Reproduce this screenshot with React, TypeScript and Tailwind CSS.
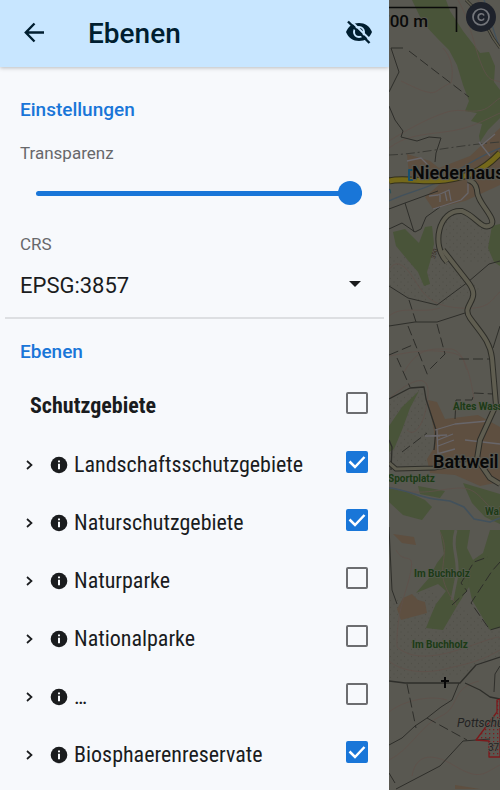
import { useState } from "react";

type Layer = { name: string; visible: boolean };

const initialLayers: Layer[] = [
  { name: "Landschaftsschutzgebiete", visible: true },
  { name: "Naturschutzgebiete", visible: true },
  { name: "Naturparke", visible: false },
  { name: "Nationalparke", visible: false },
  { name: "…", visible: false },
  { name: "Biosphaerenreservate", visible: true },
];

function Checkbox({
  id,
  checked,
  onChange,
}: {
  id: string;
  checked: boolean;
  onChange: (value: boolean) => void;
}) {
  return (
    <span className="mb-[6px] grid shrink-0">
      <input
        id={id}
        type="checkbox"
        checked={checked}
        onChange={(e) => onChange(e.target.checked)}
        className="peer col-start-1 row-start-1 size-[22px] appearance-none rounded-xs border-2 border-[#6c6d70] checked:border-[#1976d8] checked:bg-[#1976d8]"
      />
      <svg
        viewBox="0 0 22 22"
        className="pointer-events-none invisible col-start-1 row-start-1 size-[22px] peer-checked:visible"
        fill="none"
        stroke="#fff"
        strokeWidth="2.5"
      >
        <path d="M3.5 10.5 9 16 18.5 6" />
      </svg>
    </span>
  );
}

function MapView() {
  return (
    <svg
      viewBox="389 0 111 790"
      preserveAspectRatio="xMinYMin slice"
      className="absolute inset-0 size-full"
      fill="none"
      strokeLinejoin="round"
      fontFamily="Roboto, sans-serif"
    >
      <defs>
        <pattern id="dots" width="7" height="7" patternUnits="userSpaceOnUse">
          <circle cx="2" cy="2" r="0.7" fill="#504f48" />
          <circle cx="5.5" cy="5.5" r="0.7" fill="#504f48" />
        </pattern>
        <pattern id="reserve" width="4" height="4" patternUnits="userSpaceOnUse">
          <rect x="1" y="1" width="1.3" height="1.3" fill="#7c1c1e" />
        </pattern>
      </defs>
      <rect x="389" width="2000" height="2000" fill="#595851" />

      {/* meadows */}
      <g fill="url(#dots)">
        <path d="M389 255 450 262 482 288 440 306 410 298 389 286Z" />
        <path d="M389 400 424 388 430 440 438 466 389 468Z" />
        <path d="M389 600 430 590 500 630V655L460 676 389 680Z" />
        <path d="M446 212 478 220 492 235 500 228V262L460 262 446 245Z" />
      </g>

      {/* woodland */}
      <g fill="#495439">
        <path d="M412 0H446L450 11 463 31 480 53 489 52 495 66 494 82 500 90V118L488 130 480 142 479 136 482 124 471 121 477 113 465 111 469 101 463 85 457 65 449 50 437 38 423 23Z" />
        <path d="M393 232 405 229 419 243 425 227 432 226 434 244 430 262 427 272 430 284 424 286 418 272 406 258 396 246Z" />
        <path d="M492 226 500 224V266L494 262 488 248Z" />
        <path d="M389 426 402 407 419 391 410 408 402 430 394 449 389 452Z" />
        <path d="M389 487 405 491 425 500 432 507 422 520 403 515 389 502Z" />
        <path d="M418 486 445 491 440 498 420 494ZM463 483 500 494V524L485 517 472 503Z" />
        <path d="M440 530H470L467 548 476 566 469 587 457 606 443 630 426 628 432 613 436 604 446 591 438 584 416 593 429 578 437 563 444 554Z" />
        <path d="M490 530H500V628L490 630 472 600 468 582 473 560 483 553Z" />
      </g>
      <path d="M456 530C450 550 461 560 456 580L452 600" stroke="#5a5952" strokeWidth="3" />

      {/* settlements */}
      <g fill="#5e4f40">
        <path d="M407 154 430 161 439 168 470 156 500 128V185L465 201 433 209 425 197 440 184 430 180 409 175Z" />
        <path d="M428 400 437 402 445 419 478 415 500 427V482L480 486 455 475 430 473 427 459 434 448 434 431Z" />
        <path d="M403 598 412 594 418 600 425 602 427 613 412 617 401 620 397 609Z" />
        <path d="M393 534 414 537 416 545 402 543Z" />
        <path d="M455 785 480 789H455Z" />
      </g>

      {/* contour lines */}
      <g stroke="#60504a" strokeWidth="0.8">
        <path d="M401 81C416 88 430 96 437 91S448 84 451 83C453 75 454 60 443 48" />
        <path d="M389 141C415 125 430 118 444 113S465 112 477 111 492 103 500 98" />
        <path d="M389 148C405 136 420 135 444 132S477 124 500 113" />
        <path d="M458 0C470 20 475 50 482 66S492 79 500 82" />
        <path d="M478 0C486 20 490 35 500 45" />
        <path d="M389 270C396 258 405 265 414 279S429 306 460 308 490 300 500 292" />
        <path d="M389 316C402 305 420 314 440 308" />
        <path d="M404 372C420 344 435 350 449 349S470 372 474 399" />
        <path d="M389 356C410 352 427 349 447 352S462 361 467 370" />
        <path d="M407 430C417 440 427 416 428 394S411 380 391 397" />
        <path d="M396 550C404 565 414 551 411 570S396 610 397 647C415 663 445 655 473 645S498 637 500 638" />
        <path d="M389 661C402 672 425 674 445 669S480 662 500 650" />
        <path d="M440 532C450 550 439 566 444 582S454 598 456 606" />
        <path d="M389 712C404 700 431 695 447 700" />
        <path d="M389 760C410 750 422 724 441 716S450 688 479 681" />
        <path d="M412 776C415 757 429 750 455 766S485 772 500 765" />
        <path d="M389 487C420 498 440 488 461 488S486 512 500 511" />
      </g>

      {/* streams */}
      <g stroke="#42515c" strokeWidth="1.3">
        <path d="M484 0C490 15 493 32 500 48" />
        <path d="M389 201C405 193 423 190 440 181S470 160 500 148" />
        <path d="M389 488C405 489 418 497 434 499L450 501 464 507 474 519 490 522 500 518" strokeWidth="1.6" />
      </g>

      {/* field tracks */}
      <g stroke="#2e2e2a" strokeWidth="1">
        <path d="M466 0 480 14 493 38 500 48" strokeWidth="3" />
        <path d="M466 0 480 14 493 38 500 48" stroke="#5d5b4d" strokeWidth="1.5" />
        <path d="M389 92 399 72 391 48H403M389 106 395 120 403 131 401 137 417 141 429 137 441 138 436 153 435 162" />
        <path d="M389 229 402 223 415 232 421 229 426 217 440 207M389 209 405 203 438 191M405 203 414 232" />
        <path d="M389 286 408 298 437 305 468 282 489 264 500 261M389 326 415 322 437 322 468 312M493 348 500 326" />
        <path d="M389 399 410 388 424 387 426 399 436 430 434 450M389 440 392 447 391 470" strokeWidth="1.3" />
        <path d="M389 527 391 570 392 590 397 604" />
        <path d="M389 681 405 683H460L476 665 500 657M465 683 480 690 490 697 500 699" strokeWidth="1.3" />
        <path d="M459 683 452 700 441 707 427 718 415 726 402 738 389 745M396 789 440 766 463 741 490 739M494 692 495 674 500 666M389 773 395 783" />
      </g>
      <g stroke="#2e2e2a" strokeWidth="1" strokeDasharray="10 4">
        <path d="M409 51 469 97M409 300 416 322M408 326 428 376M437 324 445 354 430 369M389 355 415 344M397 358 410 387M459 359H491M455 419 456 400H472L474 393 493 394" />
        <path d="M402 452 427 433M452 605 467 591 461 583 474 562 488 557M500 562 492 571 471 603 490 630 500 627M407 684 416 728M427 718 467 740" />
      </g>
      <path d="M389 155C420 154 450 146 500 142" stroke="#3a3a35" strokeDasharray="9 3 2 3" />

      {/* village streets */}
      <g stroke="#68666a" strokeWidth="1.3">
        <path d="M407 161 421 158 428 165 427 169M429 196 438 195 449 190 451 201M440 195V202M445 192 447 201M433 209 461 200 468 193 468 179M479 142 490 156M495 134 482 145" />
        <path d="M435 430 455 424 488 421M437 430 438 454M428 436 447 435M438 440 453 434M438 446 454 440M437 454 455 449M465 440 500 444M425 436H440" />
      </g>

      {/* connecting roads */}
      <g>
        <g stroke="#2d2d28" strokeWidth="6">
          <path d="M447 262C431 246 438 209 462 211C476 216 482 231 491 225C498 219 476 202 477 190C476 184 472 181 468 180" />
          <path d="M443 250 468 282C483 301 460 304 470 318S490 341 492 358L496 405 480 440 477 459 490 478 500 484" />
          <path d="M389 463 396 469 434 468 460 464 477 463" strokeWidth="5" />
        </g>
        <g stroke="#5f5d50" strokeWidth="4">
          <path d="M447 262C431 246 438 209 462 211C476 216 482 231 491 225C498 219 476 202 477 190C476 184 472 181 468 180" />
          <path d="M443 250 468 282C483 301 460 304 470 318S490 341 492 358L496 405 480 440 477 459 490 478 500 484" />
          <path d="M389 463 396 469 434 468 460 464 477 463" strokeWidth="3" />
        </g>
        <path d="M389 181C402 177 425 183 445 180S480 174 500 153" stroke="#33301c" strokeWidth="7" />
        <path d="M389 181C402 177 425 183 445 180S480 174 500 153" stroke="#75691a" strokeWidth="5" />
      </g>

      {/* nature reserve outline */}
      <path d="M500 699 497 700V712L476 740 489 741V757H500Z" fill="url(#reserve)" stroke="#7c1a1c" strokeWidth="1.3" />

      {/* place labels */}
      <path d="M413 170H409V180H413" stroke="#18506e" strokeWidth="2" />
      <g fill="#080808" stroke="#595851" strokeWidth="2.5" paintOrder="stroke" fontWeight="600" fontSize="18">
        <text x="412" y="179">Niederhaus</text>
        <text x="433" y="468">Battweil</text>
      </g>
      <g fill="#1c3a16" stroke="#575b50" strokeWidth="1.5" paintOrder="stroke" fontWeight="700" fontSize="10">
        <text x="453" y="410">Altes Wass</text>
        <text x="388" y="482">Sportplatz</text>
        <text x="485" y="515">Wal</text>
        <text x="414" y="577">Im Buchholz</text>
        <text x="412" y="648">Im Buchholz</text>
      </g>
      <g fill="#232323" fontSize="12" stroke="#595851" strokeWidth="1.5" paintOrder="stroke">
        <text x="457" y="727" fontStyle="italic">Pottschü</text>
        <text x="488" y="751" fontSize="10">37</text>
      </g>
      <text x="383" y="196" transform="rotate(-20 383 196)" fill="#1c4860" fontSize="9" fontStyle="italic">ch</text>
      <text x="435" y="259" transform="rotate(-75 435 259)" fill="#33291f" fontSize="6">350</text>
      <path d="M445 677V688M441 681H449" stroke="#080808" strokeWidth="2" />

      {/* scale bar */}
      <path d="M389 7.5H456.5V32" stroke="#0a0a0a" strokeWidth="1.6" />
      <text x="380" y="27" fill="#0a0a0a" stroke="#595851" strokeWidth="2" paintOrder="stroke" fontSize="17" fontWeight="500">700 m</text>
    </svg>
  );
}

export default function App() {
  const [layers, setLayers] = useState(initialLayers);
  const [group, setGroup] = useState(false);
  const [opacity, setOpacity] = useState(100);

  return (
    <div className="flex h-screen overflow-hidden bg-[#595851] font-[Roboto,sans-serif] text-[#1a1c1e]">
      <aside className="flex w-[389px] shrink-0 flex-col overflow-hidden bg-[#f7f9fc]">
        <header className="flex h-[67px] shrink-0 items-center bg-[#c8e6ff] pr-4 pl-5 text-[#001e30] shadow-[0_1px_4px_rgba(0,0,0,0.25)]">
          <button aria-label="Zurück" className="flex size-7 items-center justify-center">
            <svg viewBox="0 0 28 28" className="size-7" fill="none" stroke="currentColor" strokeWidth="2.4">
              <path d="M24 12.500H6M14.500 3.500 5.800 12.500 14.500 21.500" />
            </svg>
          </button>
          <h1 className="ml-10 flex-1 text-[28px] leading-8 font-medium">Ebenen</h1>
          <button aria-label="Alle Ebenen ausblenden" className="flex size-7 items-center justify-center">
            <svg viewBox="0 0 28 28" className="size-7" fill="none">
              <path d="M1 12C3.500 6 8 3 14 3S24.500 6 27 12C24.500 18 20 21 14 21S3.500 18 1 12Z" fill="currentColor" />
              <circle cx="14" cy="12" r="5" stroke="#c8e6ff" strokeWidth="2" />
              <path d="M5 0 27 21.500" stroke="#c8e6ff" strokeWidth="2" />
              <path d="M3 1.500 24.500 23" stroke="currentColor" strokeWidth="2.400" />
            </svg>
          </button>
        </header>

        <section className="px-5 pt-[31px]">
          <h2 className="text-[19px] leading-6 font-medium text-[#1976d8]">Einstellungen</h2>
          <label htmlFor="opacity" className="mt-[19px] block text-[17px] leading-6 text-[#67686b]">
            Transparenz
          </label>
          <input
            id="opacity"
            type="range"
            min={0}
            max={100}
            value={opacity}
            onChange={(e) => setOpacity(Number(e.target.value))}
            className="mt-4 ml-4 block h-6 w-[326px] appearance-none bg-transparent [&::-webkit-slider-runnable-track]:h-[5px] [&::-webkit-slider-runnable-track]:rounded-full [&::-webkit-slider-runnable-track]:bg-[#1976d8] [&::-webkit-slider-thumb]:-mt-[10px] [&::-webkit-slider-thumb]:size-6 [&::-webkit-slider-thumb]:appearance-none [&::-webkit-slider-thumb]:rounded-full [&::-webkit-slider-thumb]:bg-[#1976d8]"
          />
          <label htmlFor="crs" className="mt-[27px] block text-[17px] leading-6 text-[#67686b]">
            CRS
          </label>
        </section>
        <div className="mx-[5px] flex items-center border-b-2 border-[#dddfe2] pt-3 pb-[13px] pl-[15px]">
          <select id="crs" className="h-9 flex-1 appearance-none bg-transparent text-[22px] leading-9">
            <option>EPSG:3857</option>
          </select>
          <svg viewBox="0 0 12 6" className="pointer-events-none mr-[23px] mb-1 -ml-3 h-[6px] w-3">
            <path d="M0 0H12L6 6Z" fill="#1a1c1e" />
          </svg>
        </div>

        <section className="pt-[21px]">
          <h2 className="px-5 text-[19px] leading-6 font-medium text-[#1976d8]">Ebenen</h2>
          <div className="font-['Roboto_Condensed','Liberation_Sans_Narrow',Roboto,sans-serif]">
            <div className="mt-3 flex h-[60px] items-center justify-between pr-[21px] pl-[30px]">
              <label htmlFor="group" className="text-[22px] leading-7 font-bold">
                Schutzgebiete
              </label>
              <Checkbox id="group" checked={group} onChange={setGroup} />
            </div>
            <ul>
              {layers.map((layer, i) => (
                <li key={layer.name} className="flex h-[58px] items-center pr-[21px] pl-[22px]">
                  <button aria-label="Aufklappen" className="flex size-4 items-center justify-center">
                    <svg viewBox="0 0 16 16" className="size-4" fill="none" stroke="currentColor" strokeWidth="1.700">
                      <path d="M5 4 9.500 8 5 12" />
                    </svg>
                  </button>
                  <button aria-label="Information" className="ml-3 flex size-[18px] items-center justify-center">
                    <svg viewBox="0 0 18 18" className="size-[18px]">
                      <circle cx="9" cy="9" r="8.300" fill="#1a1c1e" />
                      <path d="M8 4.500H10V6.300H8ZM8 7.800H10V13.300H8Z" fill="#f7f9fc" />
                    </svg>
                  </button>
                  <label htmlFor={`layer-${i}`} className="ml-[6px] flex-1 text-[22px] leading-7">
                    {layer.name}
                  </label>
                  <Checkbox
                    id={`layer-${i}`}
                    checked={layer.visible}
                    onChange={(visible) =>
                      setLayers(layers.map((l, j) => (j === i ? { ...l, visible } : l)))
                    }
                  />
                </li>
              ))}
            </ul>
          </div>
        </section>
      </aside>

      <main className="relative min-w-0 flex-1 overflow-hidden">
        <MapView />
        <button
          aria-label="Copyright"
          className="absolute top-[2px] left-[77px] flex size-[30px] items-center justify-center rounded-full bg-[#1e222b] text-[#74767b]"
        >
          <svg viewBox="0 0 20 20" className="size-5" fill="none" stroke="currentColor" strokeWidth="1.700">
            <circle cx="10" cy="10" r="8" />
            <path d="M13 8.500C12 6 7.200 6 7.200 10S12 14 13 11.500" />
          </svg>
        </button>
      </main>
    </div>
  );
}
